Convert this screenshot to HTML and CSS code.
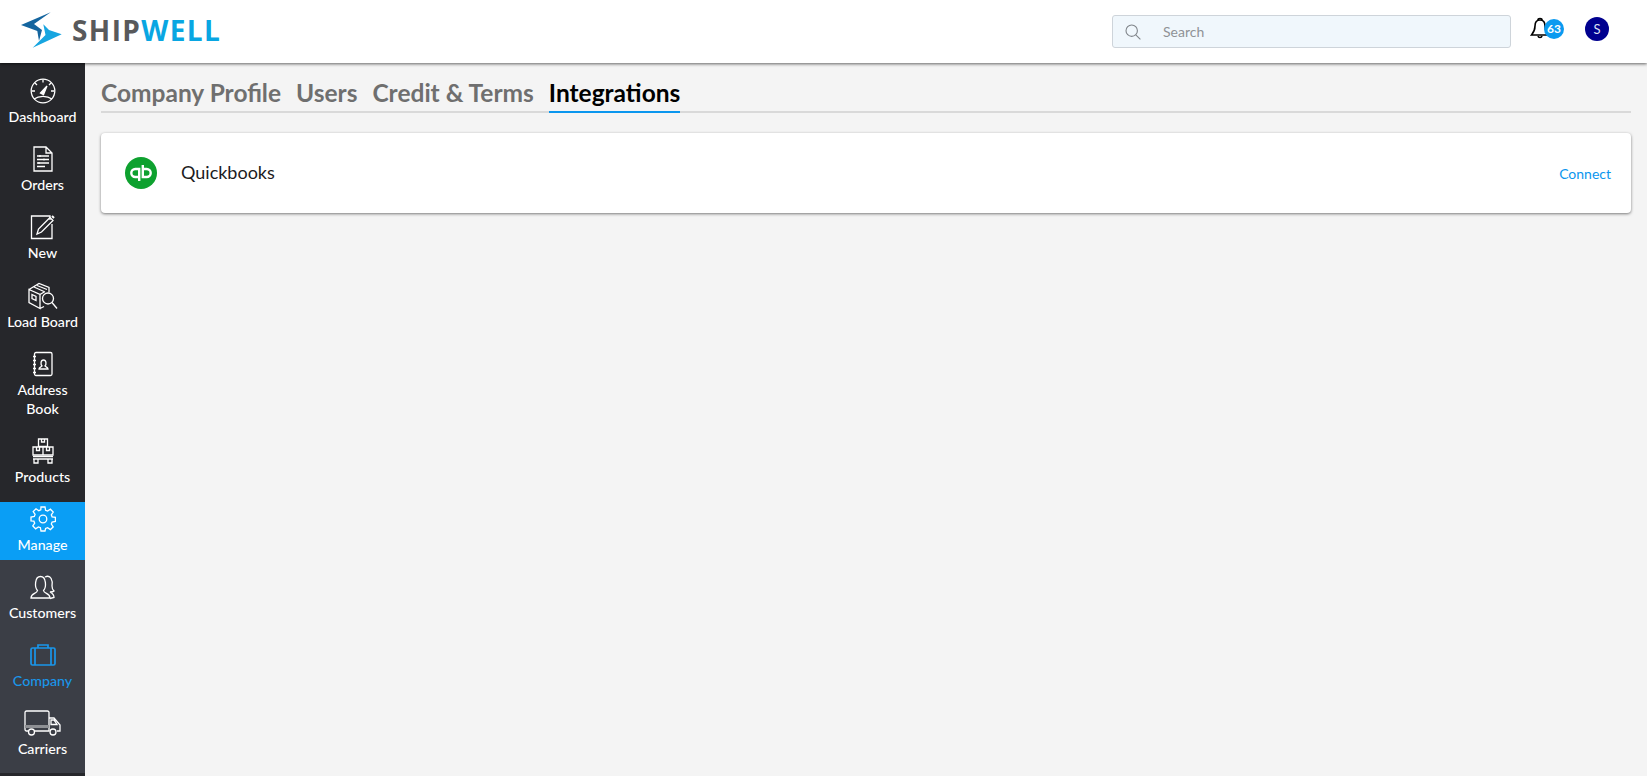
FILE: index.html
```html
<!DOCTYPE html>
<html lang="en">
<head>
<meta charset="utf-8">
<title>Shipwell</title>
<link rel="stylesheet" href="styles.css">
</head>
<body>
<header class="topbar">
  <a class="brand">
    <svg class="brand-mark" width="42" height="37" viewBox="0 0 42 37"><path fill="#14659f" d="M29.700.3 0 13l16.300 6L18 29l3-11-8-6z"/><path fill="#17a5e0" d="M40.700 22.300 11.700 35.700 24.500 23l-2.200-10.700L28 18z"/></svg>
    <span class="brand-name">SHIP<b>WELL</b></span>
  </a>
  <div class="topbar-right">
    <label class="search">
      <svg width="16" height="16" viewBox="0 0 16 16" fill="none" stroke="#7f8489" stroke-width="1.1"><circle cx="6.7" cy="6.7" r="5.7"/><path d="m10.8 10.8 4.6 4.6"/></svg>
      <span class="search-text">Search</span>
    </label>
    <div class="bell">
      <svg width="20" height="22" viewBox="0 0 20 22" fill="none" stroke="#000" stroke-width="1.6"><path d="M10 3c-4 0-5 3-5 6 0 4-1 6-3.500 9h17c-2.500-3-3.500-5-3.500-9 0-3-1-6-5-6z"/><path d="M8 3c0-2 4-2 4 0M8 19c.5 2 3.500 2 4 0"/></svg>
      <span class="badge">63</span>
    </div>
    <div class="avatar">S</div>
  </div>
</header>
<div class="layout">
  <nav class="sidebar">
    <div class="nav-main">
      <a class="nav-item">
        <svg class="ico" width="28" height="28" viewBox="0 0 28 28"><circle cx="14" cy="14" r="11.800"/><path d="M5 22c5-3.500 13-3.500 18 0M14 2.500v3M3 14h3M22 14h3M6 6l2 2M22 6l-2 2"/><path d="m11.500 16 6.500-7-3.500 8.500z" fill="#fff"/></svg>
        <span>Dashboard</span>
      </a>
      <a class="nav-item">
        <svg class="ico" width="20" height="26" viewBox="0 0 20 26"><path d="M1 1h12l6 6v18H1zM13 1v6h6"/><path d="M4 10h12M4 13.500h12M4 17h12M4 20.500h8M7 9v2M11 12.500v2M6 16v2"/></svg>
        <span>Orders</span>
      </a>
      <a class="nav-item">
        <svg class="ico" width="26" height="26" viewBox="0 0 26 26"><path d="M20 6V2H1.500v22.500H22V10"/><path d="m7 20 1.500-5L20 3.500l3 3L11.500 18z"/><path d="m22 2 2 2" stroke-width="2"/></svg>
        <span>New</span>
      </a>
      <a class="nav-item">
        <svg class="ico" width="30" height="27" viewBox="0 0 30 27"><path d="M1 7 11 1l10 4v5M1 7l11 5v14L1 20zM12 12l5-3M6 4.500l10 4.500M9 3l10 4M12 26l4-2"/><path d="M4 12l4 2v4l-4-2z"/><circle cx="20" cy="16" r="5.500"/><path d="m24 20 5 6"/></svg>
        <span>Load Board</span>
      </a>
      <a class="nav-item">
        <svg class="ico" width="20" height="25" viewBox="0 0 20 25"><rect x="1.500" y="1" width="17.500" height="23" rx="1.500"/><path d="M0 5h3M0 9h3M0 13h3M0 17h3M0 21h3"/><path d="M6 17.500c0-2 2.500-2 3-3-1.500-1.500-1.500-6 1.500-6s3 4.500 1.500 6c.5 1 3 1 3 3z"/></svg>
        <span>Address<br>Book</span>
      </a>
      <a class="nav-item">
        <svg class="ico" width="22" height="26" viewBox="0 0 22 26"><path d="M6.500 1h9v7.500h-9zM1 9h10v8H1zM11 9h10v8H11zM9.500 1v3h3V1M4.500 9v3.500h3V9M14.500 9v3.500h3V9"/><path d="M1 18.500h20M1 21h20M2 21v4h4v-4M16 21v4h4v-4"/></svg>
        <span>Products</span>
      </a>
    </div>
    <a class="nav-item nav-active">
      <svg class="ico" width="26" height="26" viewBox="0 0 26 26"><circle cx="13" cy="13" r="3.800"/><path d="M11 1h4l.6 3.300 2 .8L20.400 3.200l2.800 2.800-1.900 2.800.8 2 3.300.6v4l-3.300.6-.8 2 1.900 2.800-2.800 2.800-2.800-1.900-2 .8L15 25h-4l-.6-3.300-2-.8-2.800 1.900-2.800-2.800 1.900-2.800-.8-2L1 15v-4l3.300-.6.800-2-1.900-2.800 2.800-2.800 2.800 1.900 2-.8z"/></svg>
      <span>Manage</span>
    </a>
    <div class="nav-sub">
      <a class="nav-item">
        <svg class="ico" width="26" height="25" viewBox="0 0 26 25"><path d="M1 23.500c0-5 6-4 6.500-7.500-3-3-3-14 3-14s6 11 3 14c.5 3.500 6.500 2.500 6.500 7.500z"/><path d="M15 2.500c6-3 8 4 7 9 0 3 1 4 2 5-1 1-3 1-4 1 2 1 4 2 4 5.500l-4 1"/></svg>
        <span>Customers</span>
      </a>
      <a class="nav-item nav-current">
        <svg class="ico ico-bold" width="26" height="22" viewBox="0 0 26 22"><rect x="1" y="4" width="24" height="17" rx="1.500"/><path d="M5 4v17M21 4v17M8 4V1h10v3"/></svg>
        <span>Company</span>
      </a>
      <a class="nav-item">
        <svg class="ico" width="37" height="26" viewBox="0 0 37 26"><path d="M4 21H2.500A1.500 1.500 0 0 1 1 19.500V2.500A1.500 1.500 0 0 1 2.500 1h21A1.500 1.500 0 0 1 25 2.500V21H11M17 21h8"/><path d="M25 8h5l6 7v6h-3M27 10h3l3 4.500h-6z"/><circle cx="7.500" cy="22" r="3"/><circle cx="29" cy="22" r="3"/><path d="M1 15h24v3H1z" fill="#8e9094" stroke="none"/></svg>
        <span>Carriers</span>
      </a>
    </div>
  </nav>
  <main class="content">
    <div class="tabs">
      <a class="tab">Company Profile</a>
      <a class="tab">Users</a>
      <a class="tab">Credit &amp; Terms</a>
      <a class="tab tab-active">Integrations</a>
    </div>
    <section class="card">
      <svg class="qb" width="32" height="32" viewBox="0 0 32 32"><circle cx="16" cy="16" r="16" fill="#0ea12f"/><g fill="none" stroke="#fff" stroke-width="2.400"><path d="M13.500 20h-3.200a4 4 0 0 1 0-8h3.900v12"/><path d="M18.500 12h3.200a4 4 0 0 1 0 8h-3.900V8"/></g></svg>
      <span class="card-name">Quickbooks</span>
      <a class="connect">Connect</a>
    </section>
  </main>
</div>
</body>
</html>
```
FILE: styles.css
```css
* { box-sizing: border-box; }
html, body { height: 100%; }
body {
  margin: 0;
  height: 776px;
  overflow: hidden;
  display: flex;
  flex-direction: column;
  font-family: Lato, "Open Sans", sans-serif;
  background: #f4f4f4;
}
.topbar {
  height: 63px;
  flex: none;
  background: #fff;
  display: flex;
  align-items: center;
  justify-content: space-between;
  padding: 0 38px 0 21px;
  box-shadow: 0 1px 3px rgba(0,0,0,.6);
  position: relative;
  z-index: 2;
}
.brand { display: flex; align-items: center; gap: 9px; margin-top: -3px; }
.brand-name {
  font-family: "Open Sans", sans-serif;
  font-size: 28px;
  font-weight: 700;
  color: #58595b;
  letter-spacing: 1.4px;
}
.brand-name b { color: #09a6e2; font-weight: 700; }
.topbar-right { display: flex; align-items: center; margin-top: 0; }
.search {
  width: 399px;
  height: 33px;
  display: flex;
  align-items: center;
  padding-left: 12px;
  background: #f0f7fc;
  border: 1px solid #ced4da;
  border-radius: 3px;
  margin-right: 19px;
}
.search-text { margin-left: 22px; font-size: 14px; color: #8f9296; }
.bell { width: 36px; height: 24px; position: relative; margin: -6px 19px 0 0; }
.badge {
  position: absolute;
  left: 14px;
  top: 2px;
  width: 20px;
  height: 20px;
  border-radius: 50%;
  background: #0a9af0;
  color: #fff;
  font-size: 12px;
  font-weight: 700;
  line-height: 20px;
  text-align: center;
}
.avatar {
  width: 24px;
  height: 24px;
  margin-top: -6px;
  border-radius: 50%;
  background: #00008f;
  color: #dfe2f5;
  font-size: 13px;
  line-height: 24px;
  text-align: center;
}
.layout { flex: 1; display: flex; min-height: 0; }
.sidebar {
  width: 85px;
  flex: none;
  background: #26272b;
  display: flex;
  flex-direction: column;
  padding-top: 11px;
  padding-bottom: 3px;
}
.nav-main { display: flex; flex-direction: column; gap: 10px; margin-bottom: 10px; }
.nav-item {
  display: flex;
  flex-direction: column;
  align-items: center;
  justify-content: flex-start;
  min-height: 58.2px;
  padding-bottom: 6px;
  color: #fff;
  font-size: 14.2px;
  font-weight: 500;
  line-height: 19px;
  text-align: center;
}
.ico {
  flex: none;
  margin-top: 3px;
  height: 28px;
  fill: none;
  stroke: currentColor;
  stroke-width: 1.300;
}
.ico-bold { stroke-width: 1.700; }
.nav-item span { margin-top: 2px; }
.nav-active { background: #0a9ef5; }
.nav-sub {
  flex: 1;
  background: #3b3e46;
  display: flex;
  flex-direction: column;
  gap: 9.6px;
  padding-top: 10px;
}
.nav-current { color: #1a96ea; }
.content { flex: 1; padding: 15px 16px 0; min-width: 0; }
.tabs {
  display: flex;
  gap: 15px;
  border-bottom: 2px solid #d9d9d9;
  height: 35px;
}
.tab {
  font-size: 24.5px;
  font-weight: 700;
  line-height: 30px;
  height: 35px;
  color: #6f6f6f;
}
.tab-active { color: #000; border-bottom: 2px solid #0a96ee; }
.card {
  margin-top: 20px;
  height: 80px;
  display: flex;
  align-items: center;
  padding: 0 20px 0 24px;
  background: #fff;
  border-radius: 4px;
  box-shadow: 0 1px 3px rgba(0,0,0,.5);
}
.card-name { margin-left: 24px; padding-bottom: 2px; font-size: 18px; color: #1c1c1e; }
.connect { margin-left: auto; font-size: 14px; color: #0a96ee; }
```
